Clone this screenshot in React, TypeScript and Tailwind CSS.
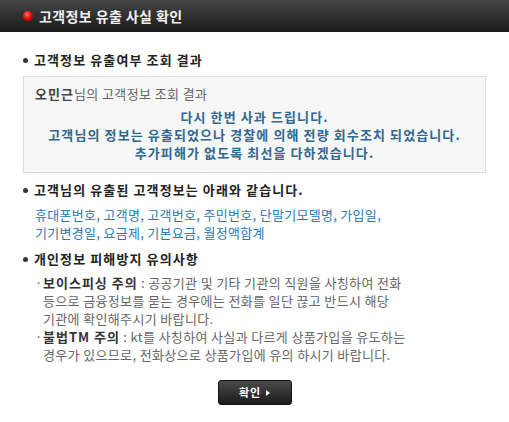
const FONT = "font-['Noto_Sans_CJK_KR','Noto_Sans',sans-serif]";

function SectionTitle({ children }: { children: React.ReactNode }) {
  return (
    <div className="flex items-center gap-[6px] h-[18px]">
      <span className="w-[5px] h-[5px] rounded-full bg-[#333]" />
      <h3 className="text-[13px] font-bold text-[#222] leading-[18px] tracking-[1.1px]">{children}</h3>
    </div>
  );
}

export default function App() {
  return (
    <div className={`${FONT} w-[509px] h-[422px] bg-white overflow-hidden`}>
      {/* Header */}
      <div className="h-[32px] bg-gradient-to-b from-[#474747] to-[#1a1a1a] flex items-center pl-[23px] gap-[6px]">
        <span className="w-[10px] h-[10px] rounded-full bg-[radial-gradient(circle_at_40%_35%,#ff6a6a,#e00000_55%,#a00000)]" />
        <h2 className="text-[14px] font-bold text-[#f0f0f0] leading-none tracking-[0.4px]">고객정보 유출 사실 확인</h2>
      </div>

      <div className="px-[23px]">
        <div className="pt-[19px]">
          <SectionTitle>고객정보 유출여부 조회 결과</SectionTitle>
        </div>

        {/* Result box */}
        <div className="mt-[7px] w-[463px] h-[97px] border border-[#dcdcdc] bg-[#f7f7f7] px-[11px] pt-[8px]">
          <p className="text-[13px] leading-[18px] text-[#666] tracking-[0.4px]">
            <span className="font-bold text-[#444] tracking-[1px]">오민근</span>님의 고객정보 조회 결과
          </p>
          <div className="mt-[5px] text-center text-[13px] leading-[18px] font-bold text-[#2f6890] tracking-[1.1px] whitespace-nowrap">
            <p>다시 한번 사과 드립니다.</p>
            <p>고객님의 정보는 유출되었으나 경찰에 의해 전량 회수조치 되었습니다.</p>
            <p>추가피해가 없도록 최선을 다하겠습니다.</p>
          </div>
        </div>

        <div className="mt-[8px]">
          <SectionTitle>고객님의 유출된 고객정보는 아래와 같습니다.</SectionTitle>
        </div>
        <div className="mt-[7px] pl-[12px] text-[13px] leading-[18px] text-[#2a7ab0] whitespace-nowrap tracking-[0.3px]">
          <p>휴대폰번호, 고객명, 고객번호, 주민번호, 단말기모델명, 가입일,</p>
          <p>기기변경일, 요금제, 기본요금, 월정액합계</p>
        </div>

        <div className="mt-[8px]">
          <SectionTitle>개인정보 피해방지 유의사항</SectionTitle>
        </div>
        <ul className="mt-[6px] pl-[12px] text-[13px] leading-[18px] text-[#666] whitespace-nowrap tracking-[0.35px]">
          <li className="flex">
            <span className="w-[8px] shrink-0">·</span>
            <div>
              <p>
                <span className="font-bold text-[#333] tracking-[1px]">보이스피싱 주의</span> : 공공기관 및 기타 기관의 직원을 사칭하여 전화
              </p>
              <p>등으로 금융정보를 묻는 경우에는 전화를 일단 끊고 반드시 해당</p>
              <p>기관에 확인해주시기 바랍니다.</p>
            </div>
          </li>
          <li className="flex">
            <span className="w-[8px] shrink-0">·</span>
            <div>
              <p>
                <span className="font-bold text-[#333] tracking-[1px]">불법TM 주의</span> : kt를 사칭하여 사실과 다르게 상품가입을 유도하는
              </p>
              <p>경우가 있으므로, 전화상으로 상품가입에 유의 하시기 바랍니다.</p>
            </div>
          </li>
        </ul>

        <div className="mt-[16px] flex justify-center">
          <button className="w-[74px] h-[25px] rounded-[3px] bg-gradient-to-b from-[#4a4a4a] to-[#1c1c1c] border border-[#111] flex items-center justify-center gap-[5px] text-white text-[11px] font-bold tracking-[1px]">
            확인
            <span className="w-0 h-0 border-y-[3px] border-y-transparent border-l-[4px] border-l-white" />
          </button>
        </div>
      </div>
    </div>
  );
}
